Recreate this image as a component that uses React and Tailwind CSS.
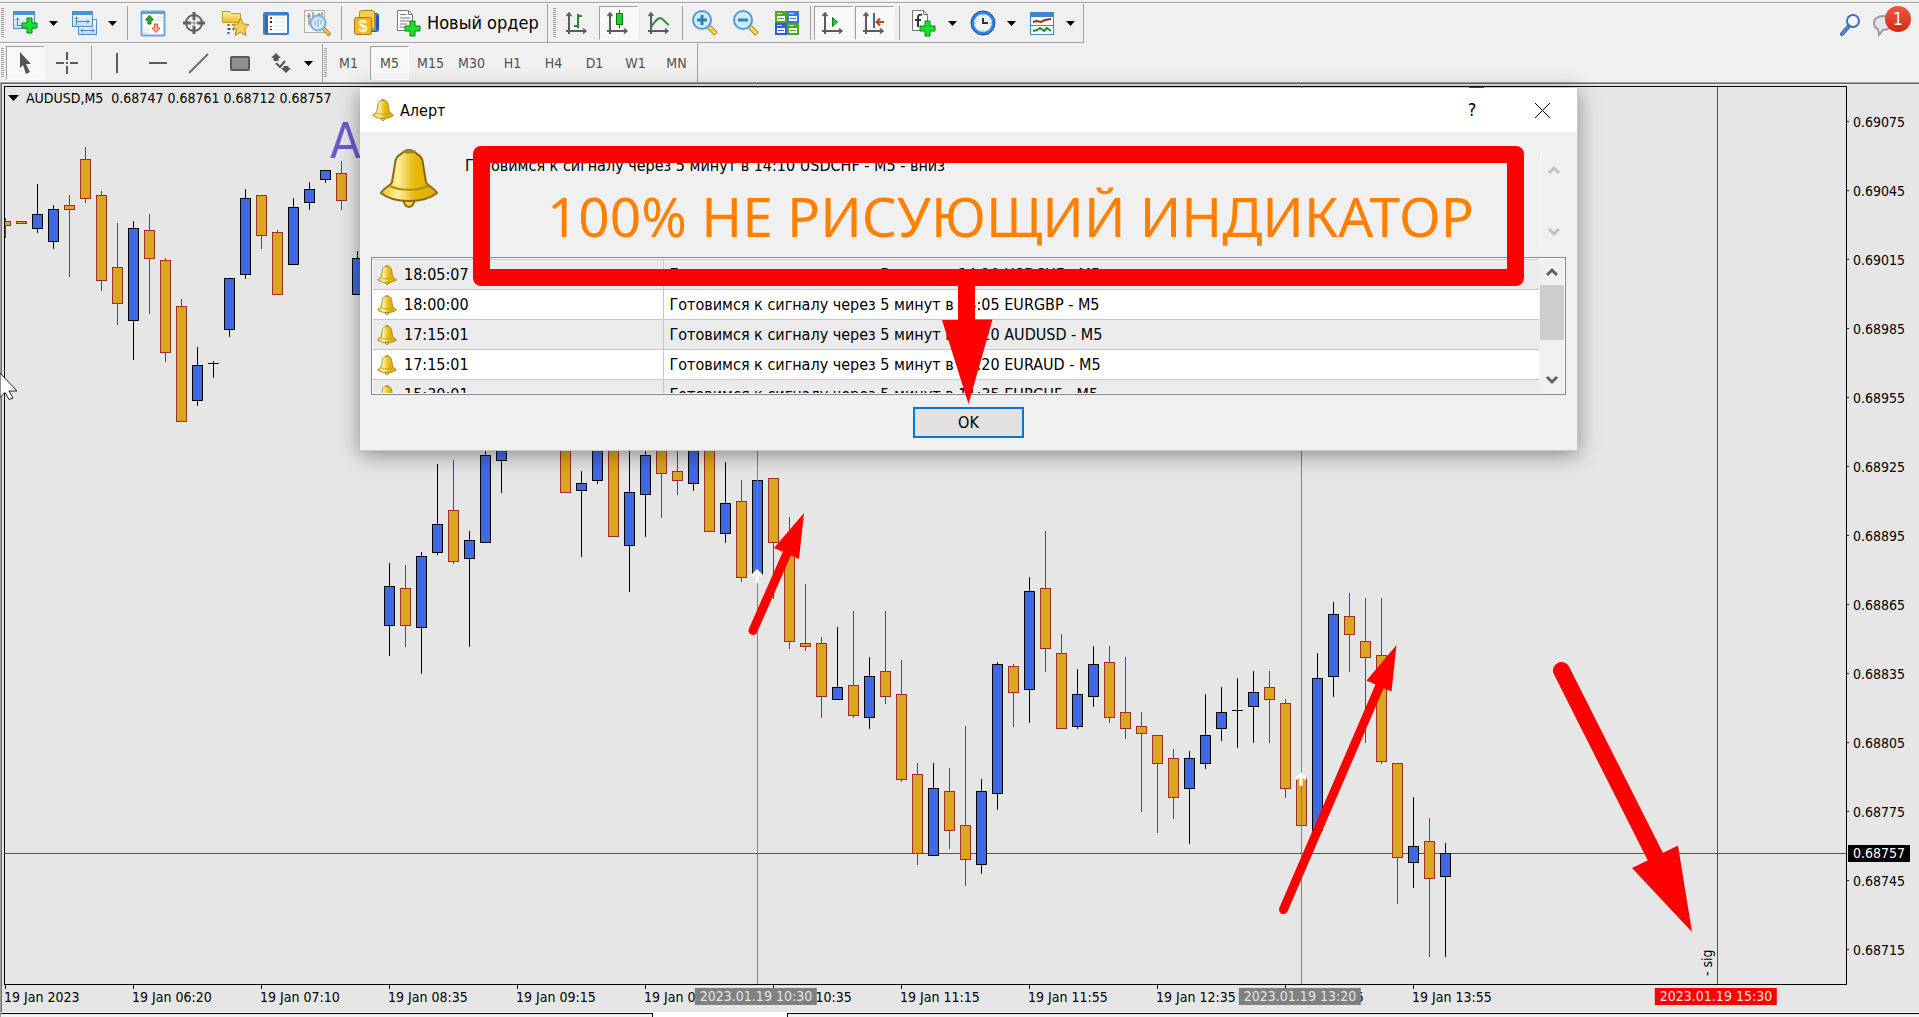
// App.jsx
import React from 'react';

// [slot, high, body top, body bottom, low, direction]
const CANDLES = [
  [0, 218, 221, 226, 238, 'd'], [1, 221, 221, 224, 224, 'd'], [2, 184, 214, 229, 233, 'u'], [3, 205, 209, 242, 249, 'u'],
  [4, 195, 205, 210, 277, 'd'], [5, 147, 159, 199, 203, 'd'], [6, 191, 195, 281, 291, 'd'], [7, 223, 267, 304, 325, 'd'],
  [8, 221, 228, 321, 360, 'u'], [9, 214, 230, 259, 314, 'd'], [10, 258, 260, 353, 362, 'd'], [11, 299, 306, 422, 422, 'd'],
  [12, 347, 365, 401, 406, 'u'], [13, 361, 363, 364, 378, 'u'], [14, 278, 278, 330, 337, 'u'], [15, 189, 198, 275, 279, 'u'],
  [16, 195, 195, 236, 249, 'd'], [17, 230, 232, 295, 295, 'd'], [18, 198, 207, 265, 265, 'u'], [19, 182, 189, 203, 210, 'u'],
  [20, 170, 170, 180, 183, 'u'], [21, 161, 173, 201, 210, 'd'], [22, 251, 258, 295, 295, 'u'], [24, 563, 586, 626, 656, 'u'],
  [25, 565, 588, 626, 647, 'd'], [26, 552, 556, 628, 674, 'u'], [27, 464, 524, 553, 555, 'u'], [28, 460, 510, 562, 564, 'd'],
  [29, 531, 540, 559, 647, 'u'], [30, 430, 455, 543, 543, 'u'], [31, 430, 430, 461, 493, 'u'], [35, 430, 430, 493, 493, 'd'],
  [36, 471, 483, 491, 557, 'u'], [37, 430, 430, 481, 484, 'u'], [38, 430, 430, 537, 537, 'd'], [39, 430, 492, 546, 592, 'u'],
  [40, 430, 455, 495, 537, 'u'], [41, 450, 450, 474, 518, 'd'], [42, 430, 471, 481, 495, 'd'], [43, 430, 430, 484, 491, 'u'],
  [44, 430, 430, 532, 532, 'd'], [45, 462, 503, 534, 543, 'u'], [46, 480, 501, 578, 582, 'd'], [47, 480, 480, 575, 575, 'u'],
  [48, 478, 478, 543, 599, 'd'], [49, 517, 548, 642, 649, 'd'], [50, 584, 643, 647, 651, 'd'], [51, 637, 643, 697, 718, 'd'],
  [52, 627, 687, 700, 700, 'u'], [53, 611, 685, 716, 718, 'd'], [54, 657, 676, 718, 729, 'u'], [55, 611, 671, 697, 704, 'd'],
  [56, 660, 694, 780, 782, 'd'], [57, 763, 774, 854, 865, 'd'], [58, 763, 788, 856, 856, 'u'], [59, 768, 791, 831, 849, 'd'],
  [60, 726, 825, 860, 886, 'd'], [61, 779, 791, 865, 874, 'u'], [62, 662, 664, 794, 810, 'u'], [63, 664, 666, 693, 727, 'd'],
  [64, 577, 591, 690, 723, 'u'], [65, 531, 588, 649, 672, 'd'], [66, 634, 653, 729, 729, 'd'], [67, 669, 694, 727, 729, 'u'],
  [68, 646, 664, 697, 707, 'u'], [69, 646, 662, 718, 723, 'd'], [70, 657, 712, 729, 739, 'd'], [71, 712, 726, 734, 812, 'd'],
  [72, 735, 735, 764, 833, 'd'], [73, 749, 758, 798, 819, 'd'], [74, 751, 758, 789, 844, 'u'], [75, 694, 735, 764, 769, 'u'],
  [76, 687, 712, 729, 741, 'u'], [77, 678, 710, 711, 748, 'u'], [78, 671, 692, 707, 743, 'u'], [79, 671, 687, 700, 743, 'd'],
  [80, 699, 703, 789, 798, 'd'], [81, 777, 777, 826, 826, 'd'], [82, 653, 678, 831, 831, 'u'], [83, 602, 614, 677, 697, 'u'],
  [84, 593, 616, 635, 672, 'd'], [85, 598, 641, 658, 743, 'd'], [86, 598, 655, 762, 764, 'd'], [87, 763, 763, 858, 904, 'd'],
  [88, 797, 846, 863, 888, 'u'], [89, 818, 841, 879, 957, 'd'], [90, 843, 853, 877, 957, 'u'],
];

const PRICES = [
  '0.69075', '0.69045', '0.69015', '0.68985', '0.68955', '0.68925', '0.68895',
  '0.68865', '0.68835', '0.68805', '0.68775', '0.68745', '0.68715',
];

const TIMES = [
  '19 Jan 2023', '19 Jan 06:20', '19 Jan 07:10', '19 Jan 08:35', '19 Jan 09:15', '19 Jan 09:55',
  '19 Jan 10:35', '19 Jan 11:15', '19 Jan 11:55', '19 Jan 12:35', '19 Jan 13:15', '19 Jan 13:55',
];

const ALERTS = [
  ['18:05:07', 'Готовимся к сигналу через 5 минут в 14:10 USDCHF - M5'],
  ['18:00:00', 'Готовимся к сигналу через 5 минут в 14:05 EURGBP - M5'],
  ['17:15:01', 'Готовимся к сигналу через 5 минут в 13:20 AUDUSD - M5'],
  ['17:15:01', 'Готовимся к сигналу через 5 минут в 13:20 EURAUD - M5'],
  ['15:30:01', 'Готовимся к сигналу через 5 минут в 11:35 EURCHF - M5'],
];

const PERIODS = ['M1', 'M5', 'M15', 'M30', 'H1', 'H4', 'D1', 'W1', 'MN'];

/* ---------- shared gradients ---------- */

const Gradients = () => (
  <svg className="absolute w-0 h-0" aria-hidden="true">
    <defs>
      <linearGradient id="gold" x1="0" y1="0" x2="1" y2="0">
        <stop offset="0" stopColor="#e9bf1d" />
        <stop offset="0.3" stopColor="#fff0a0" />
        <stop offset="0.6" stopColor="#e6b90c" />
        <stop offset="1" stopColor="#dcae00" />
      </linearGradient>
      <linearGradient id="blue" x1="0" y1="0" x2="0" y2="1">
        <stop offset="0" stopColor="#ffffff" />
        <stop offset="1" stopColor="#b9dcf6" />
      </linearGradient>
      <linearGradient id="yellow" x1="0" y1="0" x2="0" y2="1">
        <stop offset="0" stopColor="#fdf0a4" />
        <stop offset="1" stopColor="#efbb2c" />
      </linearGradient>
    </defs>
  </svg>
);

/* ---------- icons ---------- */

const Icon = ({ children }) => (
  <svg width="28" height="28" viewBox="0 0 28 28" fill="none" aria-hidden="true">
    {children}
  </svg>
);

const Plus = ({ x, y }) => (
  <path
    transform={`translate(${x} ${y})`}
    d="M5.5 .5h5v5h5v5h-5v5h-5v-5h-5v-5h5z"
    fill="#19e02c"
    stroke="#08840f"
  />
);

const Axes = () => (
  <g stroke="#5c5c5c" strokeWidth="2">
    <path d="M6 4v21M3 22h20" />
    <path d="M3.500 7L6 4l2.500 3M20 19.500l3 2.500-3 2.500" strokeWidth="1.500" />
  </g>
);

const NewChartIcon = () => (
  <Icon>
    <rect x="1.500" y="2.500" width="21" height="17" fill="url(#blue)" stroke="#4e8fca" />
    <rect x="1" y="2" width="22" height="4" fill="#4a90d2" />
    <path d="M5.500 17V9M3.500 11l2-2 2 2M5 16.500h8" stroke="#5a7f9f" />
    <Plus x="9.500" y="8.500" />
  </Icon>
);

const WindowsIcon = () => (
  <Icon>
    <rect x="7.500" y="10.500" width="18" height="15" fill="url(#blue)" stroke="#4e8fca" />
    <path d="M10 21.500h13M12 19.500l-2 2 2 2M21 19.500l2 2-2 2" stroke="#5a7f9f" />
    <rect x="1.500" y="2.500" width="20" height="15" fill="url(#blue)" stroke="#4e8fca" />
    <rect x="1" y="2" width="21" height="4" fill="#4a90d2" />
    <path d="M5.500 16V8M3.500 10l2-2 2 2M5 12.500h13M16 10.500l2 2-2 2" stroke="#5a7f9f" />
  </Icon>
);

const MarketIcon = () => (
  <Icon>
    <rect x="2.500" y="2.500" width="23" height="24" rx="1" fill="#fff" stroke="#6aa6da" strokeWidth="2" />
    <path d="M2 4h24" stroke="#5f9fd6" strokeWidth="2" />
    <path d="M18 8h6M18 11h6M4 21h6M4 24h6" stroke="#c9d4df" />
    <path d="M10.500 6.500l4 4.500h-2.500v4h-3v-4h-2.500z" fill="#2fae2a" stroke="#14760f" />
    <path d="M17 23.500l4-4.500h-2.500v-4h-3v4H13z" fill="#ffb59a" stroke="#e0501f" />
  </Icon>
);

const TargetIcon = () => (
  <Icon>
    <circle cx="14" cy="14" r="8" stroke="#5f5f5f" strokeWidth="2" />
    <path d="M14 3v8M14 17v8M3 14h8M17 14h8" stroke="#5f5f5f" strokeWidth="3" />
    <path d="M14 10v8M10 14h8" stroke="#8a8a8a" />
  </Icon>
);

const FavoritesIcon = () => (
  <Icon>
    <path d="M1.500 13.500v-11h7l2 2h9v9z" fill="url(#yellow)" stroke="#c9981d" />
    <path d="M7.500 15v10M7.500 20h6" stroke="#555" strokeWidth="2" strokeDasharray="2 2" />
    <path d="M19.500 9l2.500 6 6 .5-4.500 4.500 1.500 6.500-5.500-3.500-5.500 3.500 1.500-6.500-4.500-4.500 6-.5z" fill="#fbd253" stroke="#b5811c" />
  </Icon>
);

const NavigatorIcon = () => (
  <Icon>
    <rect x="2" y="4" width="24" height="21" rx="1" fill="#fff" stroke="#3b7fc4" strokeWidth="2" />
    <path d="M2 5.500h24" stroke="#3b7fc4" strokeWidth="2" />
    <path d="M4.500 6v18" stroke="#2f6cb3" strokeWidth="3" />
    <path d="M9 8v2M9 17v1" stroke="#e01818" strokeWidth="2" />
    <path d="M9 12v2M9 20v1" stroke="#222" strokeWidth="2" />
    <path d="M12 9h11M12 13h11M12 17h11M12 21h11" stroke="#dbe6f2" />
  </Icon>
);

const TesterIcon = () => (
  <Icon>
    <rect x="1.500" y="1.500" width="20" height="22" fill="#f4f4f0" stroke="#b4b0a0" />
    <path d="M6 4v12M10 3v8M16 4v9M19 3v7M4 7h4M14 6h4" stroke="#6d6d6d" />
    <circle cx="15" cy="14" r="7.500" fill="#cfe8fb" fillOpacity="0.900" stroke="#7bb1dc" strokeWidth="2" />
    <path d="M12 16v-4M15 18v-8M18 15v-4" stroke="#86a8c4" />
    <path d="M21 20l6 6" stroke="#b98018" strokeWidth="4" />
    <path d="M21 20l5 5" stroke="#f3cf5e" strokeWidth="2" />
  </Icon>
);

const TerminalIcon = () => (
  <Icon>
    <rect x="10.500" y="4.500" width="15" height="18" rx="2" fill="#4f9df3" stroke="#1f55b5" />
    <path d="M24 6v15" stroke="#1d57c8" strokeWidth="2" />
    <path d="M6.500 8V3.500a2 2 0 012-2h11a2 2 0 012 2V20h-8z" fill="#f6cf52" stroke="#b5861a" />
    <rect x="1.500" y="8.500" width="17" height="17" rx="2" fill="#f0b823" stroke="#a97812" />
    <text x="10" y="23" textAnchor="middle" fontSize="16" fontWeight="bold" fill="#fff8d0" fontFamily="Liberation Sans, sans-serif">$</text>
  </Icon>
);

const NewOrderIcon = () => (
  <Icon>
    <path d="M2.500 1.500h11l4 4v16h-15z" fill="#fff" stroke="#777" />
    <path d="M13.500 1.500v4h4" stroke="#777" />
    <path d="M5 5.500h6M5 9h10M5 12h10M5 15h7M5 18h5" stroke="#777" />
    <Plus x="9.500" y="11.500" />
  </Icon>
);

const BarsIcon = () => (
  <Icon>
    <Axes />
    <path d="M15 5v14M15 7h4M11 17h4" stroke="#1d8a24" strokeWidth="2" />
  </Icon>
);

const CandlesIcon = () => (
  <Icon>
    <Axes />
    <path d="M15.500 1v18" stroke="#0b7a16" />
    <rect x="12.500" y="4.500" width="6" height="11" fill="#19d02e" stroke="#0b7a16" />
  </Icon>
);

const LineIcon = () => (
  <Icon>
    <Axes />
    <path d="M6 18c3-4 6-9 9-9s4 4 9 7" stroke="#2f8a33" strokeWidth="2" />
  </Icon>
);

const LensIcon = ({ plus }) => (
  <Icon>
    <path d="M18 18l7 7" stroke="#a8861a" strokeWidth="5" />
    <path d="M18 18l6.500 6.500" stroke="#f6dc4e" strokeWidth="3" />
    <circle cx="11" cy="11" r="9" fill="#cfeafb" stroke="#4d9bd8" strokeWidth="2" />
    <path d={plus ? 'M6 11h10M11 6v10' : 'M6 11h10'} stroke="#2f7fb0" strokeWidth="3" />
  </Icon>
);

const Tile = ({ x, y, fill }) => (
  <g transform={`translate(${x} ${y})`}>
    <rect width="12" height="12" fill={fill} />
    <rect x="2" y="5" width="8" height="5" fill="#fff" />
    <path d="M2 2.500h5" stroke="#dfe9ff" />
    <path d="M3 7.500h6" stroke={fill} />
  </g>
);

const TilesIcon = () => (
  <Icon>
    <Tile x="2" y="2" fill="#4ca81e" />
    <Tile x="14" y="2" fill="#3b73e0" />
    <Tile x="2" y="14" fill="#2a5fe0" />
    <Tile x="14" y="14" fill="#4ca81e" />
  </Icon>
);

const ScrollIcon = () => (
  <Icon>
    <Axes />
    <path d="M13.500 8.500v9l5-4.500z" fill="#2bc83a" stroke="#137a1c" />
  </Icon>
);

const ShiftIcon = () => (
  <Icon>
    <Axes />
    <path d="M14 4v15" stroke="#2a6fa8" strokeWidth="2" />
    <path d="M24 13h-7M20 9.500L16.500 13l3.500 3.500" stroke="#c4400f" strokeWidth="2" />
  </Icon>
);

const IndicatorIcon = () => (
  <Icon>
    <path d="M2.500 1.500h11l4 4v16h-15z" fill="#fff" stroke="#777" />
    <path d="M13.500 1.500v4h4" stroke="#777" />
    <path d="M12 6c-3-1-4 0-4 3v9M5 11h6" stroke="#333" strokeWidth="2" />
    <Plus x="9.500" y="11.500" />
  </Icon>
);

const ClockIcon = () => (
  <Icon>
    <circle cx="14" cy="14" r="10.500" fill="#eef3f8" stroke="#2f86e4" strokeWidth="3" />
    <circle cx="14" cy="14" r="12" stroke="#0d4aa0" />
    <path d="M14 9v5h5" stroke="#333" strokeWidth="2" />
    <path d="M14 5v2M14 21v2M5 14h2M21 14h2" stroke="#9aa5b0" />
  </Icon>
);

const TemplateIcon = () => (
  <Icon>
    <rect x="2.500" y="3.500" width="23" height="22" fill="#fff" stroke="#3f86cb" />
    <rect x="2" y="3" width="24" height="5" fill="#3f86cb" />
    <path d="M3 16.500h22" stroke="#3f86cb" />
    <path d="M5 13l4-1 4 1 4-2 6-1" stroke="#a0281a" strokeWidth="2" />
    <path d="M5 22l4-1 3-2 4 3 3-3 4 3" stroke="#218a2c" strokeWidth="2" />
  </Icon>
);

const CursorIcon = () => (
  <Icon>
    <path d="M8 3l11 12h-5l4 8-4 2-3-9-3 3z" fill="#555" />
  </Icon>
);

const CrosshairIcon = () => (
  <Icon>
    <path d="M14 3v8M14 17v8M3 14h8M17 14h8M14 13v2" stroke="#5a5a5a" strokeWidth="2" />
  </Icon>
);

const VLineIcon = () => (
  <Icon>
    <path d="M14 4v20" stroke="#5a5a5a" strokeWidth="2" />
  </Icon>
);

const HLineIcon = () => (
  <Icon>
    <path d="M5 14h18" stroke="#5a5a5a" strokeWidth="2" />
  </Icon>
);

const TrendIcon = () => (
  <Icon>
    <path d="M4 24L23 5" stroke="#6a6a6a" strokeWidth="2" />
  </Icon>
);

const RectIcon = () => (
  <Icon>
    <rect x="5" y="8" width="18" height="13" rx="1" fill="#909090" stroke="#5a5a5a" strokeWidth="2" />
  </Icon>
);

const ArrowsIcon = () => (
  <Icon>
    <path d="M9 4l5 5h-2.500v3h-5V9H4z" fill="#555" />
    <path d="M19 24l-5-5h2.500v-2h5v2H24z" fill="#555" />
    <path d="M9 14l4 4 5-6" stroke="#555" strokeWidth="2" />
  </Icon>
);

const BellIcon = ({ className }) => (
  <svg className={className} viewBox="0 0 60 60" aria-hidden="true">
    <path d="M25 50h10c1 6-2 9-5 9s-6-3-5-9z" fill="#f2d04a" stroke="#8a6a10" strokeWidth="2" />
    <path
      d="M30 2c4 0 6 2 8 4 4 2 6 5 6 10l3 18c1 4 9 6 11 11-6 5-16 8-28 8S8 50 2 45c2-5 10-7 11-11l3-18c0-5 2-8 6-10 2-2 4-4 8-4z"
      fill="url(#gold)"
      stroke="#8a6a10"
      strokeWidth="2"
    />
    <path d="M24 4c3-3 9-3 12 0-3 2-9 2-12 0z" fill="#a9811a" />
    <path d="M11 38c10 5 28 5 38 0" fill="none" stroke="#b58c12" strokeWidth="2" />
  </svg>
);

const SearchIcon = () => (
  <Icon>
    <path d="M5 24l7-8" stroke="#2a56ad" strokeWidth="4" strokeLinecap="round" />
    <path d="M5 24l6-7" stroke="#5c8fe6" strokeWidth="2" strokeLinecap="round" />
    <circle cx="16" cy="11" r="6" fill="#f4f7fc" stroke="#3a6fd0" strokeWidth="2" />
  </Icon>
);

const ChatIcon = () => (
  <Icon>
    <path d="M12 6c6 0 9 3 9 7s-4 7-9 7l-4 5-1-6c-3-1-4-3-4-6 0-4 3-7 9-7z" fill="#e4e4ea" stroke="#9a9aa2" strokeWidth="2" />
  </Icon>
);

const Chevron = ({ up }) => (
  <svg width="12" height="12" viewBox="0 0 12 12" fill="none" aria-hidden="true">
    <path d={up ? 'M1 9l5-5 5 5' : 'M1 3l5 5 5-5'} stroke="currentColor" strokeWidth="3" />
  </svg>
);

/* ---------- toolbar pieces ---------- */

const Grip = () => (
  <div className="w-[3px] my-1 mx-px bg-[repeating-linear-gradient(#a0a0a0_0_1px,#f0f0f0_1px_2px)]" />
);

const Separator = () => <div className="w-px my-0.5 mx-0.5 bg-[#a0a0a0]" />;
const WideSeparator = () => <div className="w-px my-0.5 mx-1 bg-[#a0a0a0]" />;

const ToolButton = ({ label, active, children }) => (
  <button
    aria-label={label}
    aria-pressed={active}
    className={`flex items-center justify-center w-[39px] mx-px my-0.5 text-sm text-[#505050] border ${
      active ? 'bg-[#f8f8f8] border-t-[#a0a0a0] border-l-[#a0a0a0] border-b-white border-r-white' : 'border-transparent'
    }`}
  >
    {children}
  </button>
);

const DropArrow = ({ label }) => (
  <button aria-label={label} className="flex items-center w-[18px] pl-[3px]">
    <svg width="9" height="5" viewBox="0 0 9 5" aria-hidden="true">
      <path d="M0 0h9L4.500 5z" fill="#000" />
    </svg>
  </button>
);

const Toolbars = () => (
  <header className="bg-[#f0f0f0] border-t border-[#a0a0a0] mt-0.5">
    <div className="flex justify-between border-t border-white">
      <div className="flex h-[39px] border-b border-r border-[#a0a0a0]">
        <Grip />
        <ToolButton label="Новый график"><NewChartIcon /></ToolButton>
        <DropArrow label="Выбрать график" />
        <ToolButton label="Профили"><WindowsIcon /></ToolButton>
        <DropArrow label="Выбрать профиль" />
        <WideSeparator />
        <ToolButton label="Обзор рынка"><MarketIcon /></ToolButton>
        <ToolButton label="Окно данных"><TargetIcon /></ToolButton>
        <ToolButton label="Навигатор"><FavoritesIcon /></ToolButton>
        <ToolButton label="Терминал"><NavigatorIcon /></ToolButton>
        <ToolButton label="Тестер"><TesterIcon /></ToolButton>
        <WideSeparator />
        <ToolButton label="Торговля"><TerminalIcon /></ToolButton>
        <button className="flex items-center gap-1 pl-2 pr-2 text-lg">
          <NewOrderIcon />
          Новый ордер
        </button>
        <div className="w-px bg-[#a0a0a0]" />
        <div className="w-1" />
        <Grip />
        <ToolButton label="Бары"><BarsIcon /></ToolButton>
        <ToolButton label="Свечи" active><CandlesIcon /></ToolButton>
        <ToolButton label="Линия"><LineIcon /></ToolButton>
        <Separator />
        <ToolButton label="Увеличить"><LensIcon plus /></ToolButton>
        <ToolButton label="Уменьшить"><LensIcon /></ToolButton>
        <ToolButton label="Мозаика"><TilesIcon /></ToolButton>
        <Separator />
        <ToolButton label="Автопрокрутка" active><ScrollIcon /></ToolButton>
        <ToolButton label="Сдвиг графика" active><ShiftIcon /></ToolButton>
        <WideSeparator />
        <ToolButton label="Индикаторы"><IndicatorIcon /></ToolButton>
        <DropArrow label="Список индикаторов" />
        <ToolButton label="Периоды"><ClockIcon /></ToolButton>
        <DropArrow label="Список периодов" />
        <ToolButton label="Шаблоны"><TemplateIcon /></ToolButton>
        <DropArrow label="Список шаблонов" />
        <div className="w-0.5" />
      </div>
      <div className="flex items-center pr-2">
        <ToolButton label="Поиск"><SearchIcon /></ToolButton>
        <button aria-label="Сообщения" className="relative w-10">
          <ChatIcon />
          <span className="absolute -top-1 right-0 flex items-center justify-center size-[26px] rounded-full bg-linear-to-b from-[#f0583c] to-[#d42412] text-white text-lg">
            1
          </span>
        </button>
      </div>
    </div>
    <div className="flex">
      <div className="flex h-[39px] border-t border-t-white border-r border-r-[#a0a0a0]">
        <Grip />
        <ToolButton label="Курсор" active><CursorIcon /></ToolButton>
        <ToolButton label="Перекрестие"><CrosshairIcon /></ToolButton>
        <WideSeparator />
        <ToolButton label="Вертикальная линия"><VLineIcon /></ToolButton>
        <ToolButton label="Горизонтальная линия"><HLineIcon /></ToolButton>
        <ToolButton label="Трендовая линия"><TrendIcon /></ToolButton>
        <ToolButton label="Прямоугольник"><RectIcon /></ToolButton>
        <ToolButton label="Стрелки"><ArrowsIcon /></ToolButton>
        <DropArrow label="Список стрелок" />
        <div className="w-px ml-[3px] bg-[#a0a0a0]" />
        <Grip />
        {PERIODS.map((p) => (
          <ToolButton key={p} label={p} active={p === 'M5'}>{p}</ToolButton>
        ))}
      </div>
    </div>
  </header>
);

/* ---------- chart ---------- */

const Candle = ({ data }) => {
  const [slot, high, top, bottom, low, dir] = data;
  const x = 5 + slot * 16;
  const line = dir === 'u' ? '#000000' : '#a52a2a';
  const fill = dir === 'u' ? '#4169e1' : '#daa520';
  return (
    <g>
      <rect x={x} y={high} width="1" height={low - high} fill={line} />
      <rect x={x - 5} y={top} width="11" height={bottom - top} fill={line} />
      {bottom - top > 2 && <rect x={x - 4} y={top + 1} width="9" height={bottom - top - 2} fill={fill} />}
    </g>
  );
};

const SignalMark = ({ x, y }) => (
  <path d={`M${x - 5} ${y + 7}l5-5 5 5M${x} ${y + 2}v12`} stroke="#fff" strokeWidth="3" fill="none" />
);

const TimeMark = ({ className, children }) => (
  <span className={`absolute top-[3px] -translate-x-1/2 h-[17px] px-[5px] leading-[17px] whitespace-nowrap text-[#e6e6e6] ${className}`}>
    {children}
  </span>
);

const Chart = () => (
  <main className="grow flex flex-col border-t border-l border-[#a0a0a0] bg-[#e6e6e6] text-sm">
    <div className="grow flex flex-col border-t border-l border-[#696969] pt-0.5 pl-0.5">
      <div className="flex">
        <div className="relative grow min-w-0 border border-black">
          <svg className="block w-full h-[897px]" role="img" aria-label="AUDUSD M5">
            <g transform="translate(-5 -87)" shapeRendering="crispEdges">
              <rect x="5" y="853" width="1841" height="1" fill="#dc143c" />
              <rect x="1469" y="86" width="15" height="2" fill="#dc143c" />
              {CANDLES.map((c) => <Candle key={c[0]} data={c} />)}
              <rect x="757" y="87" width="1" height="897" fill="#808080" />
              <rect x="1301" y="87" width="1" height="897" fill="#808080" />
              <rect x="1717" y="87" width="1" height="897" fill="#ff0000" />
            </g>
            <g transform="translate(-5 -87)">
              <SignalMark x={757} y={569} />
              <SignalMark x={1301} y={772} />
              <text x="330" y="158" fontSize="50" fill="#6a5acd">AUDUSD</text>
              <text transform="translate(1712 976) rotate(-90)" fontSize="14">- sig</text>
            </g>
          </svg>
          <div className="absolute top-0 left-0 flex items-center gap-[7px] pl-[3px] h-[21px]">
            <svg width="11" height="6" viewBox="0 0 11 6" aria-hidden="true">
              <path d="M0 0h11L5.500 6z" fill="#000" />
            </svg>
            <span className="whitespace-pre">AUDUSD,M5  0.68747 0.68761 0.68712 0.68757</span>
          </div>
        </div>
        <div className="relative w-[72px] flex flex-col py-px">
          {PRICES.map((p) => (
            <div key={p} className="flex-1 flex items-center gap-1">
              <span className="w-0.5 h-px bg-black" />
              {p}
            </div>
          ))}
          <div className="absolute left-px top-[759px] w-[62px] h-[17px] pl-[5px] leading-[17px] bg-black text-white">
            0.68757
          </div>
        </div>
      </div>
      <div className="relative grow flex h-[27px] overflow-hidden">
        {TIMES.map((t) => (
          <div key={t} className="w-32 shrink-0 whitespace-nowrap">
            <div className="w-px h-1 ml-px bg-black" />
            <div className="leading-[17px]">{t}</div>
          </div>
        ))}
        <TimeMark className="left-[752px] bg-[#808080]">2023.01.19 10:30</TimeMark>
        <TimeMark className="left-[1296px] bg-[#808080]">2023.01.19 13:20</TimeMark>
        <TimeMark className="left-[1712px] bg-[#ff0000]">2023.01.19 15:30</TimeMark>
      </div>
    </div>
    <div className="flex h-[5px] border-t border-white bg-white">
      <div className="w-[652px] bg-[#f0f0f0] border-t border-r border-black" />
      <div className="w-[134px]" />
      <div className="grow bg-[#f0f0f0] border-t border-l border-black" />
    </div>
  </main>
);

/* ---------- alert window ---------- */

const AlertDialog = () => (
  <section
    role="dialog"
    aria-label="Алерт"
    className="absolute left-[360px] right-[341px] top-[88px] bg-[#f0f0f0] border-b border-r border-[#c8c8c8] shadow-[0_4px_20px_rgba(0,0,0,0.4)] text-base"
  >
    <div className="flex items-center h-11 bg-white pl-3">
      <BellIcon className="size-[22px]" />
      <h1 className="grow pl-1.5 pt-0.5 leading-6">Алерт</h1>
      <button aria-label="Справка" className="w-[70px] text-lg">?</button>
      <button aria-label="Закрыть" className="flex justify-center w-[70px]">
        <svg width="15" height="15" viewBox="0 0 15 15" aria-hidden="true">
          <path d="M0 0l15 15M15 0L0 15" stroke="#000" />
        </svg>
      </button>
    </div>

    <div className="flex h-[125px] pl-[19px] pr-[11px]">
      <BellIcon className="size-[60px] mt-4" />
      <p className="grow pl-[26px] pt-6 leading-5">Готовимся к сигналу через 5 минут в 14:10 USDCHF - M5 - вниз</p>
      <div className="flex flex-col justify-between items-center w-[26px] mt-6 mb-[11px] py-2 border-l border-white text-[#c0c0c0]">
        <Chevron up />
        <Chevron />
      </div>
    </div>

    <div className="flex h-[138px] mx-[11px] p-px border border-[#828790] bg-white overflow-hidden">
      <div className="grow overflow-hidden">
        <table className="w-full border-collapse">
          <tbody>
            {ALERTS.map(([time, text], i) => (
              <tr key={i} className={`h-[30px] border-t border-[#c8c8c8] ${i % 2 === 0 ? 'bg-[#ebebeb]' : 'bg-white'}`}>
                <td className="w-[290px] p-0 border-r border-[#c8c8c8]">
                  <div className="flex items-center gap-[7px] pl-1">
                    <BellIcon className="size-5" />
                    {time}
                  </div>
                </td>
                <td className="p-0 pl-1.5">{text}</td>
              </tr>
            ))}
          </tbody>
        </table>
      </div>
      <div className="flex flex-col items-center w-[25px] bg-[#f0f0f0] text-[#606060]">
        <button aria-label="Вверх" className="flex items-center justify-center h-[26px] shrink-0"><Chevron up /></button>
        <div className="w-6 h-[55px] bg-[#cdcdcd]" />
        <button aria-label="Вниз" className="flex items-center justify-center h-[26px] mt-auto"><Chevron /></button>
      </div>
    </div>

    <div className="flex justify-center pt-3 pb-3">
      <button className="w-[111px] h-[31px] border-2 border-[#0078d7] bg-[#e1e1e1]">OK</button>
    </div>

    {/* callout drawn on top of the window */}
    <div className="absolute left-[113px] right-[53px] top-[58px] h-[140px] flex items-center justify-center border-[17px] border-[#ff0000] rounded-lg pl-6">
      <span className="font-['Noto_Sans','Open_Sans',sans-serif] text-[55px] leading-[64px] whitespace-nowrap text-[#ff8000]">100% НЕ РИСУЮЩИЙ ИНДИКАТОР</span>
    </div>
  </section>
);

/* ---------- arrows over everything ---------- */

const Annotations = () => (
  <svg className="absolute top-0 left-0 w-full h-full pointer-events-none" aria-hidden="true">
    <g fill="#ff0000" stroke="none">
      <path d="M804 513l-5 46-25-11z" />
      <path d="M1396.500 645l-5 46.500-25-11z" />
      <path d="M1692 932l-60-64 46-22.500z" />
      <path d="M958 285h17v34.500h17.500L968.500 404 942 320h16z" />
    </g>
    <g stroke="#ff0000" strokeLinecap="round" fill="none">
      <path d="M753 630.500L788 551" strokeWidth="9" />
      <path d="M1283.500 909.500L1381 683" strokeWidth="9" />
      <path d="M1561.500 670.500L1656 858" strokeWidth="17" />
    </g>
    <path d="M0 373l17 18h-8l4 7-4 1.500-4-7-5 5z" fill="#fff" stroke="#222" />
  </svg>
);

const App = () => {
  return (
    <div className="relative min-h-screen flex flex-col overflow-hidden bg-[#f0f0f0] text-black font-['DejaVu_Sans_Condensed','Noto_Sans',sans-serif]">
      <Gradients />
      <Toolbars />
      <Chart />
      <AlertDialog />
      <Annotations />
    </div>
  );
};

export default App;
